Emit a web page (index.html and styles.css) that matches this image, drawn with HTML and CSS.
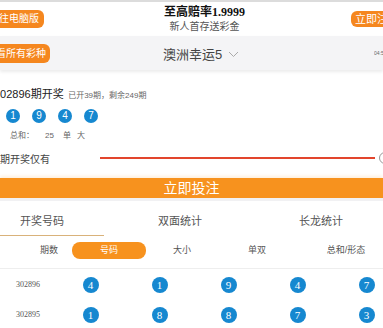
FILE: index.html
```html
<!DOCTYPE html>
<html lang="zh-CN">
<head>
    <meta charset="UTF-8">
    <meta name="viewport" content="width=device-width, initial-scale=1.0">
    <title>澳洲幸运5</title>
    <link rel="stylesheet" href="styles.css">
</head>
<body>
    <header class="topbar">
        <a class="pill pill-left" href="#">前往电脑版</a>
        <div class="promo">
            <div class="promo-title">至高赔率1.9999</div>
            <div class="promo-sub">新人首存送彩金</div>
        </div>
        <a class="pill pill-right" href="#">立即注册</a>
    </header>

    <div class="gamebar">
        <a class="pill pill-games" href="#">查看所有彩种</a>
        <div class="game-name">
            澳洲幸运5
            <svg class="chevron" width="11" height="7" viewBox="0 0 11 7"><path d="M1 1l4.5 4.5L10 1" fill="none" stroke="#aaa" stroke-width="1"/></svg>
        </div>
        <div class="timer">04:58:20</div>
    </div>

    <section class="draw">
        <div class="draw-title">
            <span class="issue">302896期开奖</span>
            <span class="draw-meta">已开39期，剩余249期</span>
        </div>
        <div class="balls">
            <span class="ball">1</span>
            <span class="ball">9</span>
            <span class="ball">4</span>
            <span class="ball">7</span>
        </div>
        <div class="sum">
            <span>总和：</span>
            <span class="sum-val">25</span>
            <span>单</span>
            <span>大</span>
        </div>
        <div class="countdown">
            <span class="countdown-label">距下期开奖仅有</span>
            <div class="progress"></div>
            <span class="clock"></span>
        </div>
    </section>

    <a class="bet-btn" href="#">立即投注</a>

    <nav class="tabs">
        <a class="tab tab-1 active" href="#">开奖号码</a>
        <a class="tab tab-2" href="#">双面统计</a>
        <a class="tab tab-3" href="#">长龙统计</a>
    </nav>

    <div class="thead">
        <span class="th th-issue">期数</span>
        <span class="th th-nums">号码</span>
        <span class="th th-size">大小</span>
        <span class="th th-odd">单双</span>
        <span class="th th-sum">总和/形态</span>
    </div>

    <div class="result-row">
        <span class="row-issue">302896</span>
        <span class="cell"><span class="ball ball-sm">4</span></span>
        <span class="cell"><span class="ball ball-sm">1</span></span>
        <span class="cell"><span class="ball ball-sm">9</span></span>
        <span class="cell"><span class="ball ball-sm">4</span></span>
        <span class="cell"><span class="ball ball-sm">7</span></span>
    </div>
    <div class="result-row">
        <span class="row-issue">302895</span>
        <span class="cell"><span class="ball ball-sm">1</span></span>
        <span class="cell"><span class="ball ball-sm">8</span></span>
        <span class="cell"><span class="ball ball-sm">8</span></span>
        <span class="cell"><span class="ball ball-sm">7</span></span>
        <span class="cell"><span class="ball ball-sm">3</span></span>
    </div>
</body>
</html>
```

FILE: styles.css
```css
body {
    margin: 0;
    padding: 0;
    width: 383px;
    overflow: hidden;
    background: #fff;
    font-family: "Liberation Sans", "Noto Sans CJK SC", sans-serif;
    color: #333;
}

a {
    text-decoration: none;
}

.pill {
    flex-shrink: 0;
    display: block;
    background: #f5871f;
    color: #fff;
    border-radius: 6px;
    white-space: nowrap;
}

/* top promo bar */
.topbar {
    display: flex;
    align-items: center;
    height: 34px;
    border-top: 2px solid #dcdcdc;
    background: #fff;
}

.pill-left {
    margin-left: -16px;
    padding: 0 5px;
    height: 18px;
    line-height: 18px;
    font-size: 10px;
}

.promo {
    flex: 1;
    padding-left: 14px;
    text-align: center;
}

.promo-title {
    font-size: 12px;
    font-weight: bold;
    color: #111;
    line-height: 15px;
    font-family: "Liberation Serif", "Noto Sans CJK SC", serif;
}

.promo-sub {
    font-size: 10px;
    color: #555;
    line-height: 14px;
}

.pill-right {
    margin-right: -20px;
    padding: 0 4px;
    height: 16px;
    line-height: 16px;
    font-size: 11px;
}

/* game selector */
.gamebar {
    display: flex;
    align-items: center;
    height: 34px;
    background: #f4f4f6;
    box-shadow: 0 2px 3px rgba(0, 0, 0, 0.08);
}

.pill-games {
    margin-left: -18px;
    padding: 0 4px;
    height: 19px;
    line-height: 19px;
    font-size: 10px;
}

.game-name {
    flex: 1;
    padding-right: 22px;
    text-align: center;
    font-size: 13px;
    color: #444;
}

.chevron {
    vertical-align: 1px;
    margin-left: 2px;
}

.timer {
    flex-shrink: 0;
    width: 9px;
    overflow: hidden;
    white-space: nowrap;
    font-size: 5px;
    color: #666;
}

/* latest draw */
.draw {
    padding: 15px 0 13px;
}

.draw-title {
    margin-left: -6px;
    line-height: 16px;
}

.issue {
    font-size: 11px;
    color: #222;
}

.draw-meta {
    font-size: 8px;
    color: #666;
}

.balls {
    display: flex;
    gap: 12px;
    margin: 5px 0 0 6px;
}

.ball {
    display: inline-block;
    width: 14px;
    height: 14px;
    line-height: 14px;
    border-radius: 50%;
    background: #1688d0;
    color: #fff;
    font-size: 10px;
    text-align: center;
}

.sum {
    display: flex;
    margin: 7px 0 0 10px;
    line-height: 12px;
    font-size: 8px;
    color: #666;
}

.sum span {
    margin-right: 6px;
}

.sum .sum-val {
    margin-left: 5px;
    margin-right: 9px;
}

.countdown {
    display: flex;
    align-items: center;
    margin-top: 9px;
    height: 14px;
}

.countdown-label {
    margin-left: -20px;
    font-size: 10px;
    color: #444;
    white-space: nowrap;
}

.progress {
    margin-left: 50px;
    width: 275px;
    height: 2px;
    background: #e2452d;
    flex-shrink: 0;
}

.clock {
    flex-shrink: 0;
    margin-left: 4px;
    width: 10px;
    height: 10px;
    border: 1px solid #999;
    border-radius: 50%;
}

/* bet button */
.bet-btn {
    display: block;
    height: 20px;
    line-height: 20px;
    background: #f7921e;
    color: #fff;
    text-align: center;
    font-size: 14px;
    box-shadow: 0 -2px 3px rgba(247, 146, 30, 0.15);
}

/* tabs */
.tabs {
    display: flex;
    border-top: 3px solid #f1f1f3;
    white-space: nowrap;
}

.tab {
    flex-shrink: 0;
    padding: 13px 0 6px;
    line-height: 15px;
    font-size: 11px;
    color: #555;
    text-align: center;
    border-bottom: 1px solid transparent;
}

.tab-1 {
    width: 84px;
    padding-right: 20px;
}

.tab-1.active {
    border-bottom-color: #d9b27a;
}

.tab-2 {
    width: 152px;
}

.tab-3 {
    width: 130px;
}

/* table */
.thead {
    display: flex;
    padding-top: 6px;
    height: 26px;
    border-bottom: 1px solid #eeeeee;
    white-space: nowrap;
}

.th {
    flex-shrink: 0;
    height: 17px;
    line-height: 17px;
    font-size: 9px;
    color: #555;
    text-align: center;
}

.th-issue {
    margin-left: 26px;
    width: 46px;
}

.th-nums {
    width: 74px;
    background: #f7921e;
    color: #fff;
    border-radius: 8px;
}

.th-size {
    width: 72px;
}

.th-odd {
    width: 78px;
}

.th-sum {
    width: 100px;
}

.result-row {
    display: flex;
    align-items: center;
    height: 30px;
    white-space: nowrap;
}

.result-row:last-child {
    border-bottom: 1px solid #eeeeee;
}

.row-issue {
    flex-shrink: 0;
    width: 56px;
    text-align: center;
    font-size: 8px;
    color: #555;
    font-family: "Liberation Serif", serif;
}

.cell {
    flex-shrink: 0;
    width: 69px;
    text-align: center;
}

.ball-sm {
    width: 16px;
    height: 16px;
    line-height: 16px;
    font-size: 11px;
    font-family: "Liberation Serif", serif;
}
```
